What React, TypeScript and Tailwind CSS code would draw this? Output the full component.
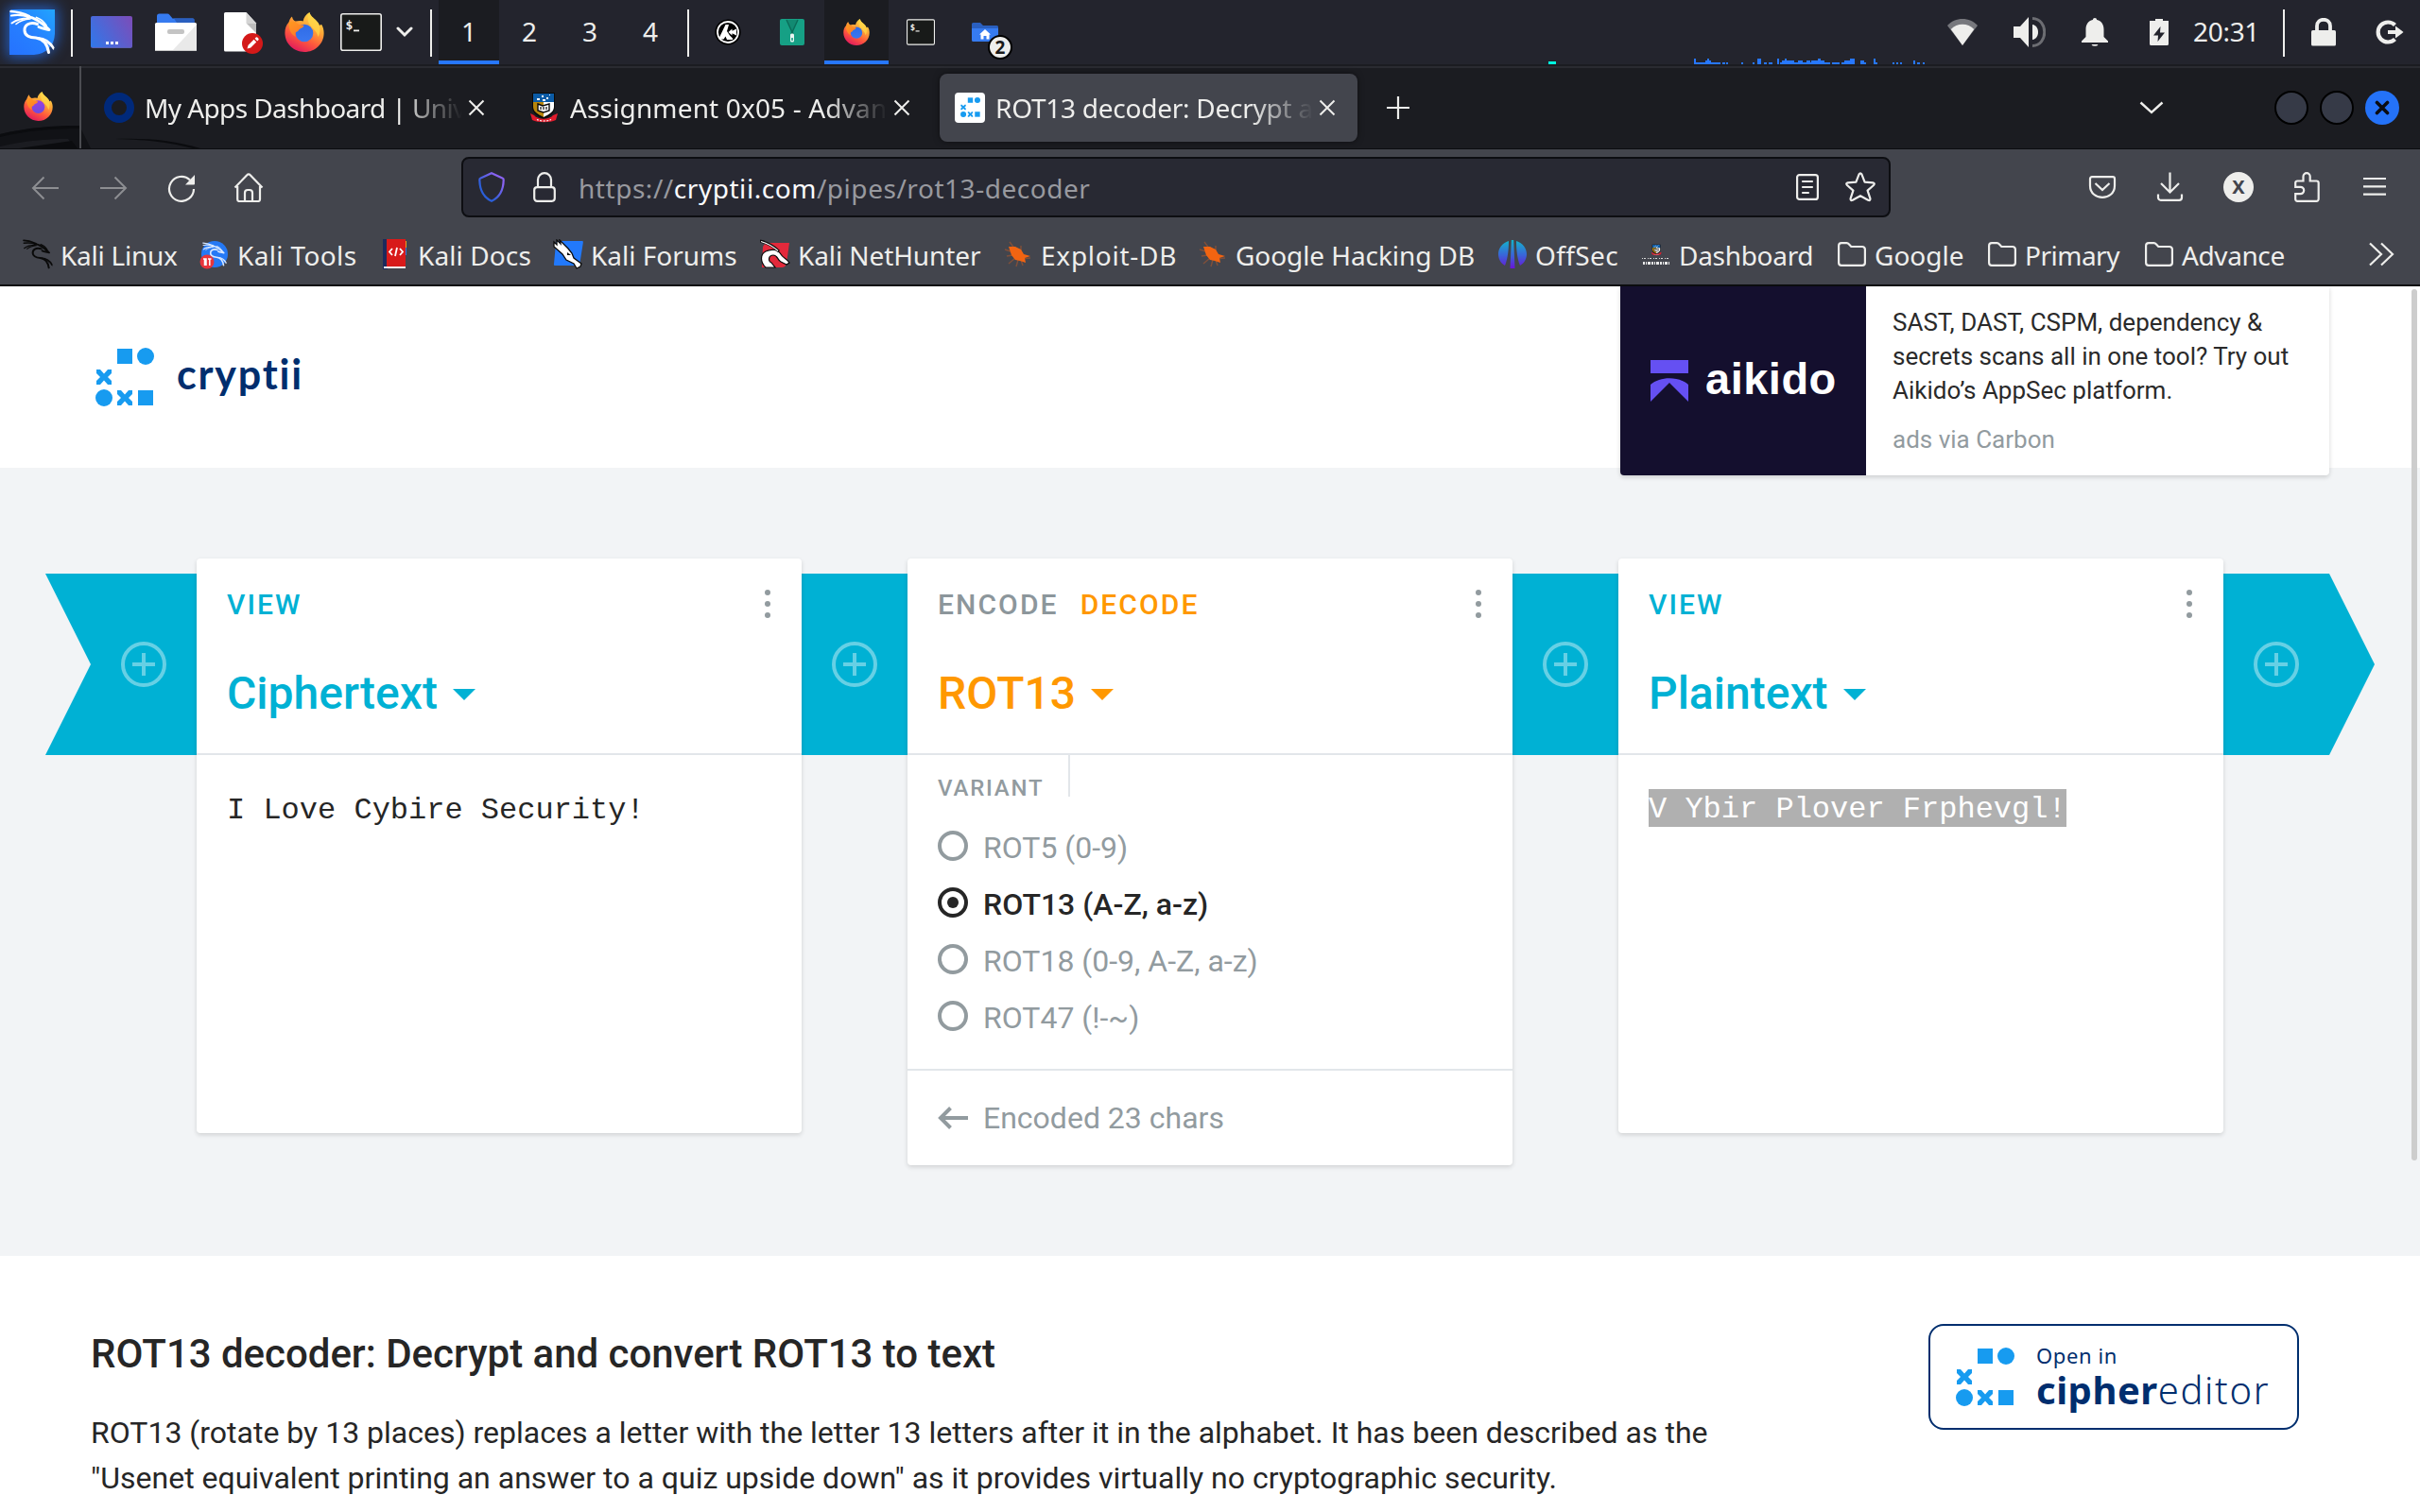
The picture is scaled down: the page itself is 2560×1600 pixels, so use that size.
import type { ReactNode } from "react";

/* ---------- brand drawings ---------- */

function Dragon({ size, color }: { size: number; color: string }) {
  return (
    <svg width={size} height={size} viewBox="0 0 48 48" fill="none" stroke={color} strokeLinecap="round" strokeLinejoin="round">
      <path d="M1.500 2C8 2.500 15 4 21 7" strokeWidth="2.400" />
      <path d="M2 6.500C8 5.500 15 6 21 8" strokeWidth="2.200" />
      <path d="M2.500 14.500C7 11 13 9.500 20 9.500" strokeWidth="2" />
      <path d="M7 15.500C11 12 16 10.500 22 10" strokeWidth="1.600" />
      <path d="M19 7.500C27 8.500 34 13.500 42 21.500C38 20.500 34 20 31 18.500" strokeWidth="3" />
      <path d="M28.500 8.500C33 10 36.500 13 39 17" strokeWidth="1.800" />
      <path d="M29.500 15.500C21 12.500 15.500 17 16 22.500C16.500 28.500 22 29.500 28 30C35 31 40 36 41.500 45.500" strokeWidth="3" />
      <path d="M30 30C37 30.500 43 34 46.500 40.500" strokeWidth="2.200" />
      <path d="M36 33C41 35 44 37.500 46.500 42" strokeWidth="1.400" />
    </svg>
  );
}

function Firefox({ size, id, globe = "#3b78f0", globeDark = "#2f6be6" }: { size: number; id: string; globe?: string; globeDark?: string }) {
  return (
    <svg width={size} height={size} viewBox="0 0 42 42">
      <defs>
        <linearGradient id={id + "-body"} x1="0.8" y1="0.05" x2="0.3" y2="1">
          <stop offset="0" stopColor="#ffe04a" />
          <stop offset="0.35" stopColor="#ffa436" />
          <stop offset="0.65" stopColor="#ff5a3c" />
          <stop offset="1" stopColor="#e0185e" />
        </linearGradient>
        <linearGradient id={id + "-globe"} x1="0" y1="0" x2="0" y2="1">
          <stop offset="0" stopColor={globeDark} />
          <stop offset="1" stopColor={globe} />
        </linearGradient>
        <linearGradient id={id + "-head"} x1="0" y1="0" x2="0.6" y2="1">
          <stop offset="0" stopColor="#ff9a1f" />
          <stop offset="1" stopColor="#ff7a2a" />
        </linearGradient>
      </defs>
      <path d="M4.6 10.5 C5 8 6.5 5.6 8 4.4 C8.2 6.6 9.4 8.4 11.6 9.6 C14 8.8 17 8.6 19.6 9.4 C20.4 5.4 22.8 2 26.4 0 C27.6 4.2 30.4 5.6 33 8.2 C35.6 10.6 36.6 12.2 37 14 L39 12.8 C41 16 41.6 19 41.6 22 C41.6 33.4 32.4 42 21 42 C9.4 42 0.4 33 0.4 21.8 C0.4 17.2 1.8 13.4 4.6 10.5Z" fill={`url(#${id}-body)`} />
      <path d="M26.4 0 C27.6 4.2 30.4 5.6 33 8.2 C38 13 38.6 20 35.6 26 C34.4 21 31 18 28 15 C25 11.6 23 6 26.4 0Z" fill="#ffd84a" opacity="0.75" />
      <circle cx="21" cy="22" r="9.3" fill={`url(#${id}-globe)`} />
      <path d="M4.6 10.5 C8 9 10.4 9.4 12 10.4 C13.4 12.2 15.6 13.4 20.4 13.8 C20.4 15.8 18.4 16.6 16.4 17.6 C14.6 18.6 14.8 20.2 13.2 20.6 C11 21 10.6 23.4 12.2 26 C7 24 4 18 4.6 10.5Z" fill={`url(#${id}-head)`} />
    </svg>
  );
}

function CryptiiMark({ size }: { size: number }) {
  return (
    <svg width={size} height={size} viewBox="0 0 62 62" fill="#179bf0">
      <rect x="23" y="1" width="16" height="16" />
      <circle cx="53" cy="9" r="9" />
      <circle cx="9" cy="53" r="9" />
      <rect x="45" y="45" width="16" height="16" />
      <path d="M1 23H5L9 27.500L13 23H17V27L13 31L17 35V39H13L9 34.500L5 39H1V35L5 31L1 27Z" />
      <path d="M23 45H27L31 49.500L35 45H39V49L35 53L39 57V61H35L31 56.500L27 61H23V57L27 53L23 49Z" />
    </svg>
  );
}

function Crest({ width, height }: { width: number; height: number }) {
  return (
    <svg width={width} height={height} viewBox="0 0 30 32">
      <path d="M2 0H26V15C26 22 20 25 14 28C8 25 2 22 2 15Z" fill="#0a0a0a" />
      <path d="M3 1H25V10H3Z" fill="#0b5ba6" />
      <path d="M3 10H14V26C8 23 3 20 3 15Z" fill="#b8860b" />
      <path d="M14 10H25V15C25 20 20 23 14 26Z" fill="#fff" />
      <path d="M8 12L13 14L20 12V19L14 21L8 19Z" fill="#fff" stroke="#0a0a0a" strokeWidth="1.4" />
      <path d="M11 15V18M14 15V18M17 15V18" stroke="#0a0a0a" strokeWidth="1.2" />
      <path d="M7 6h3v2H7zM12 3h2v2h-2zM17 5h2v2h-2zM13 7h3v2h-3zM20 2h1v1h-1z" fill="#fff" />
      <path d="M0 22L4 24C8 29 20 29 24 24L29 22L27 29C21 32 8 32 2 29Z" fill="#e01b2c" />
      <path d="M7 28.5C11 30.5 18 30.5 22 28.5" stroke="#fff" strokeWidth="1.2" strokeDasharray="2 1.4" fill="none" />
    </svg>
  );
}

function Terminal({ width, height }: { width: number; height: number }) {
  return (
    <svg width={width} height={height} viewBox="0 0 44 40">
      <rect x="0.8" y="0.8" width="42.4" height="38.4" rx="2" fill="#181a19" stroke="#eeeeec" strokeWidth="1.6" />
      <text x="5.5" y="17" fontSize="13" fontWeight="700" fill="#eeeeec" className="font-['DejaVu_Sans_Mono',monospace]">$</text>
      <path d="M14 18.4H20" stroke="#eeeeec" strokeWidth="1.8" />
    </svg>
  );
}

/* ---------- desktop panel ---------- */

function Cell({ children, className = "w-[68px]" }: { children: ReactNode; className?: string }) {
  return <div className={"flex h-full shrink-0 items-center justify-center " + className}>{children}</div>;
}

function Separator() {
  return (
    <Cell className="w-4 pt-px">
      <div className="h-[50px] w-[2px] bg-[#eeeeec]" />
    </Cell>
  );
}

const cpu: [number, number, number][] = [
  [0, 2, 6], [2, 18, 2], [14, 2, 6], [12, 6, 4], [20, 8, 2], [30, 3, 2], [34, 2, 2], [50, 2, 2], [62, 2, 2], [67, 4, 6], [74, 3, 2], [79, 4, 2],
  [88, 2, 6], [91, 5, 2], [93, 4, 4], [96, 2, 6], [98, 8, 4], [106, 8, 2], [110, 5, 4], [115, 10, 2], [119, 4, 4], [124, 7, 4], [131, 3, 6], [134, 4, 4],
  [138, 6, 2], [146, 8, 2], [156, 4, 2], [159, 7, 4], [165, 3, 6], [168, 2, 6], [176, 4, 4], [179, 3, 2], [190, 2, 6], [192, 2, 2], [210, 2, 2],
  [214, 2, 2], [218, 2, 2], [232, 2, 4], [236, 3, 2], [242, 2, 2],
];

function Panel() {
  return (
    <header className="flex h-[68px] items-center bg-[#23242d] font-['Noto_Sans',sans-serif] text-[28px] leading-[28px] text-[#eeeeec]">
      <Cell>
        <div className="flex size-12 items-center justify-center rounded-tl-[4px] rounded-br-[22px] bg-linear-to-tr from-[#2672ff] via-[#2680ff] to-[#23a5ff] shadow-[0_0_14px_3px_rgba(39,119,255,0.65)]">
          <Dragon size={48} color="#ffffff" />
        </div>
      </Cell>
      <Separator />
      <Cell>
        <div className="flex h-[34px] w-11 items-end justify-center gap-[2px] rounded-[2px] border-b border-[#5a5fb0] bg-linear-[60deg] from-[#2f78ea] to-[#7d4cb8] pb-[3px]">
          <i className="size-[3px] bg-white" />
          <i className="size-[3px] bg-white" />
          <i className="size-[3px] bg-white" />
        </div>
      </Cell>
      <Cell>
        <svg width="48" height="48" viewBox="0 0 48 48">
          <path d="M4 16V7a2.500 2.500 0 0 1 2.500-2.500H15a3 3 0 0 1 2.400 1.200L20.500 9.500H42a1.500 1.500 0 0 1 1.500 1.500V16Z" fill="#367bf0" />
          <path d="M22 9.500H42a1.500 1.500 0 0 1 1.500 1.500V14H25Z" fill="#2a5fbf" />
          <rect x="2" y="14" width="44" height="30" rx="1.500" fill="#fff" />
          <path d="M46 16 L20 44 H44.500A1.500 1.500 0 0 0 46 42.500Z" fill="#e9e9e9" />
          <rect x="15" y="21" width="18" height="5" rx="2" fill="#c4c4c4" />
          <rect x="2" y="43" width="44" height="1" fill="#c9c9c9" />
        </svg>
      </Cell>
      <Cell>
        <svg width="48" height="48" viewBox="0 0 48 48">
          <path d="M8.500 3H30.500L41 14.500V44.500H8.500A1.500 1.500 0 0 1 7 43V4.500A1.500 1.500 0 0 1 8.500 3Z" fill="#fff" />
          <path d="M30.500 3V14.500H41Z" fill="#d4d4d4" />
          <path d="M30.500 14.500H41V25Z" fill="#bdbdbd" />
          <circle cx="37" cy="36" r="11" fill="#d41919" />
          <path d="M31.500 41.500L32.600 37.800L38.600 31.800L41.200 34.400L35.200 40.400ZM39.600 30.800L40.800 29.600A1 1 0 0 1 42.200 29.600L43.400 30.800A1 1 0 0 1 43.400 32.200L42.200 33.400Z" fill="#fff" />
        </svg>
      </Cell>
      <Cell><Firefox size={42} id="ff-launch" /></Cell>
      <Cell className="w-[52px]"><Terminal width={44} height={40} /></Cell>
      <Cell className="w-10">
        <svg width="18" height="12" viewBox="0 0 18 12" fill="none"><path d="M2 2L9 9L16 2" stroke="#eeeeec" strokeWidth="3" strokeLinecap="round" /></svg>
      </Cell>
      <Separator />
      <Cell className="w-16 border-b-4 border-[#2777ff] bg-[#1b1c21] pt-[2px]">1</Cell>
      <Cell className="w-16 pb-[2px]">2</Cell>
      <Cell className="w-16 pb-[2px]">3</Cell>
      <Cell className="w-16 pb-[2px]">4</Cell>
      <Separator />
      <Cell>
        <svg width="28" height="28" viewBox="0 0 28 28">
          <circle cx="14" cy="14" r="13.600" fill="#000" />
          <circle cx="14" cy="14" r="11" fill="#000" stroke="#fff" strokeWidth="1.800" />
          <path d="M4.500 20.500L11.500 6H15L13 13L16 17.500L19 20.500V22H13L11.500 18.500L9.500 21.500H4.500Z" fill="#fff" />
          <path d="M14.500 14L18.500 10.500V12.800L23 10.500V17.500L18.500 15.200V17.500Z" fill="#fff" />
        </svg>
      </Cell>
      <Cell>
        <svg width="28" height="28" viewBox="0 0 28 28">
          <rect x="1" y="0" width="26" height="28" rx="2" fill="#16a085" />
          <path d="M8.500 1H19.500L14 13Z" fill="#128a72" />
          <path d="M8 1L13.500 13V16M20 1L14.500 13V16" fill="none" stroke="#0b6b58" strokeWidth="1.400" />
          <rect x="12" y="15.500" width="4" height="9" rx="1.500" fill="#e8f5f2" />
          <rect x="13.200" y="20" width="1.600" height="3" fill="#16a085" />
        </svg>
      </Cell>
      <Cell className="w-[68px] border-b-4 border-[#2777ff] bg-[#1b1c21] pt-1"><Firefox size={28} id="ff-task" /></Cell>
      <Cell><Terminal width={30} height={28} /></Cell>
      <Cell className="relative w-[68px]">
        <svg width="28" height="20" viewBox="0 0 28 20">
          <path d="M0 6V1.500A1.500 1.500 0 0 1 1.500 0H9L12 3H26.500A1.500 1.500 0 0 1 28 4.500V8H0Z" fill="#2a5fbf" />
          <path d="M0 6H28V18.500A1.500 1.500 0 0 1 26.500 20H1.500A1.500 1.500 0 0 1 0 18.500Z" fill="#367bf0" />
          <path d="M14 7L20 12.500H18.500V17.500H15.500V14H12.500V17.500H9.500V12.500H8Z" fill="#fff" />
        </svg>
        <span className="absolute top-[37px] left-[37px] flex size-[26px] items-center justify-center rounded-full border-2 border-black bg-[#eeeeec] text-[19px] leading-[19px] font-bold text-[#1a1a1a]">2</span>
      </Cell>
      <div className="flex h-full flex-1 items-end justify-end">
        <svg width="402" height="8" viewBox="0 0 402 8">
          <rect x="0" y="5" width="8" height="3" fill="#00ffe0" />
          {cpu.map(([x, w, h], i) => <rect key={i} x={154 + x} y={8 - h} width={w} height={h} fill="#2777ff" />)}
        </svg>
      </div>
      <Cell className="w-[72px]">
        <svg width="34" height="30" viewBox="0 0 34 30">
          <path d="M1 8C9 -1.500 25 -1.500 33 8L17 29Z" fill="#77787d" />
          <path d="M4.800 12C11 5 23 5 29.200 12L17 29Z" fill="#eeeeec" />
        </svg>
      </Cell>
      <Cell className="w-[70px]">
        <svg width="34" height="32" viewBox="0 0 34 32">
          <path d="M0 10H7L16 0V32L7 22H0Z" fill="#eeeeec" />
          <path d="M20 8C28 9 28 23 20 24Z" fill="#eeeeec" />
          <path d="M20 1.500C37 2 37 30 20 30.500" fill="none" stroke="#6c6d72" strokeWidth="3" />
        </svg>
      </Cell>
      <Cell>
        <svg width="28" height="30" viewBox="0 0 28 30">
          <path d="M14 0A2.200 2.200 0 0 1 16.200 2C21 3 23.500 7 23.500 12V20L28 24.500V26H0V24.500L4.500 20V12C4.500 7 7 3 11.800 2A2.200 2.200 0 0 1 14 0Z" fill="#eeeeec" />
          <path d="M10.500 28H17.500A3.600 2.400 0 0 1 10.500 28Z" fill="#eeeeec" />
        </svg>
      </Cell>
      <Cell>
        <svg width="20" height="28" viewBox="0 0 20 28">
          <path d="M6 0H14V2H20V26.500A1.500 1.500 0 0 1 18.500 28H1.500A1.500 1.500 0 0 1 0 26.500V2H6Z" fill="#eeeeec" />
          <path d="M11.500 8L4 17.500H9L8.500 24L16 14.500H11Z" fill="#23242d" />
        </svg>
      </Cell>
      <Cell className="w-[90px] justify-start pb-[2px] pl-[2px]"><span className="tracking-[-0.3px]">20:31</span></Cell>
      <Separator />
      <Cell>
        <svg width="26" height="30" viewBox="0 0 26 30">
          <rect x="0" y="13" width="26" height="16.500" rx="1.500" fill="#eeeeec" />
          <path d="M6 14V8.500C6 -0.500 20 -0.500 20 8.500V14" fill="none" stroke="#eeeeec" strokeWidth="3.800" />
        </svg>
      </Cell>
      <Cell className="w-[68px] pl-1">
        <svg width="30" height="26" viewBox="0 0 30 26">
          <path d="M20.500 5.500A10.500 10.500 0 1 0 20.500 20.500" fill="none" stroke="#eeeeec" strokeWidth="4.200" />
          <path d="M13 11H21V6.500L29.500 13L21 19.500V15H13Z" fill="#eeeeec" />
        </svg>
      </Cell>
    </header>
  );
}

/* ---------- browser chrome ---------- */

function CloseX() {
  return (
    <svg width="18" height="18" viewBox="0 0 18 18" className="shrink-0"><path d="M1.500 1.500L16.500 16.500M16.500 1.500L1.500 16.500" stroke="#eeeeec" strokeWidth="2" /></svg>
  );
}

function Tab({ icon, title, tracking, active = false }: { icon: ReactNode; title: string; tracking: string; active?: boolean }) {
  return (
    <div className={"flex h-[72px] w-[442px] shrink-0 items-center rounded-lg pl-4 " + (active ? "bg-[#43454d] shadow-[0_0_6px_rgba(0,0,0,0.5)]" : "")}>
      <div className="flex size-8 shrink-0 items-center justify-center">{icon}</div>
      <div className={"ml-[11px] w-[336px] overflow-hidden pt-px whitespace-nowrap [mask-image:linear-gradient(to_right,black_calc(100%-66px),transparent)] " + tracking}>{title}</div>
      <div className="ml-[6px]"><CloseX /></div>
    </div>
  );
}

function TabBar() {
  return (
    <div className="relative flex h-[90px] items-center overflow-hidden border-t-2 border-b border-t-[#1b1c21] border-b-[#0c0d10] bg-[#1b1c21] text-[28px] leading-[38px] text-[#eeeeec] shadow-[inset_0_2px_0_#2a2b31]">
      <svg className="absolute bottom-0 left-0" width="220" height="30" viewBox="0 0 220 30">
        <path d="M0 15C30 8 55 6 84 6L96 30H80L72 20C50 20 25 22 0 28Z" fill="#111216" />
        <path d="M0 15C30 8 55 6 84 6V9C55 9 30 11 0 18ZM20 30L76 22L82 30Z" fill="#0b0c0f" />
        <path d="M122 20C160 19 185 22 212 30H204C180 24 160 21 122 20Z" fill="#0b0c0f" />
      </svg>
      <div className="relative flex h-full w-[84px] items-center pb-[2px] pl-[25px]"><Firefox size={31} id="ff-pin" globe="#6a4be0" globeDark="#9b3fe0" /></div>
      <div className="relative mr-2 h-full w-[2px] bg-[#4b4c51]" />
      <div className="relative flex flex-1 items-center gap-2">
        <Tab
          icon={<div className="size-8 rounded-full border-8 border-[#00297a]" />}
          title="My Apps Dashboard | Univ"
          tracking="tracking-[-0.6px]"
        />
        <Tab icon={<Crest width={30} height={32} />} title="Assignment 0x05 - Advan" tracking="tracking-[0.15px]" />
        <Tab
          active
          icon={<div className="flex size-8 items-center justify-center rounded-[4px] bg-white"><CryptiiMark size={21} /></div>}
          title="ROT13 decoder: Decrypt a"
          tracking="tracking-[-0.25px]"
        />
        <svg className="ml-[22px]" width="26" height="26" viewBox="0 0 26 26"><path d="M13 1V25M1 13H25" stroke="#eeeeec" strokeWidth="2.200" /></svg>
      </div>
      <svg className="mr-[117px]" width="26" height="14" viewBox="0 0 26 14" fill="none"><path d="M1.500 1.500L13 12L24.500 1.500" stroke="#eeeeec" strokeWidth="2.400" /></svg>
      <div className="mr-[22px] flex gap-3">
        <div className="size-9 rounded-full border-2 border-black bg-[#363a47]" />
        <div className="size-9 rounded-full border-2 border-black bg-[#363a47]" />
        <div className="flex size-9 items-center justify-center rounded-full bg-[#2472f8]">
          <svg width="16" height="16" viewBox="0 0 16 16"><path d="M2.500 2.500L13.500 13.500M13.500 2.500L2.500 13.500" stroke="#0b0c10" strokeWidth="3.600" strokeLinecap="round" /></svg>
        </div>
      </div>
    </div>
  );
}

function NavBar() {
  return (
    <div className="flex h-20 items-center text-[28px] leading-[38px] text-[#eeeeec]">
      <div className="flex w-[488px] items-center pl-8">
        <svg width="32" height="32" viewBox="0 0 32 32" fill="none"><path d="M30 17H3M14.500 5.500L3 17L14.500 28.500" stroke="#8d8e92" strokeWidth="2" /></svg>
        <svg className="ml-10" width="32" height="32" viewBox="0 0 32 32" fill="none"><path d="M2 17H29M17.500 5.500L29 17L17.500 28.500" stroke="#8d8e92" strokeWidth="2" /></svg>
        <svg className="ml-10" width="32" height="32" viewBox="0 0 32 32" fill="none">
          <path d="M29 18A13 13 0 1 1 25 8.500" stroke="#eeeeec" strokeWidth="2.200" />
          <path d="M30 3V12.500A1 1 0 0 1 29 13.500H20Z" fill="#eeeeec" />
        </svg>
        <svg className="ml-[39px]" width="32" height="32" viewBox="0 0 32 32" fill="none">
          <path d="M1.500 16.500L14.500 3A2 2 0 0 1 17.500 3L30.500 16.500M4.200 15V29A2 2 0 0 0 6.200 31H26A2 2 0 0 0 28 29V15M12 31V22A3 3 0 0 1 15 19H17A3 3 0 0 1 20 22V31" stroke="#eeeeec" strokeWidth="2.200" />
        </svg>
      </div>
      <div className="flex h-16 w-[1512px] items-center rounded-lg border-2 border-[#0d0e12] bg-[#282933]">
        <svg className="ml-4" width="28" height="32" viewBox="0 0 28 32" fill="none">
          <defs><linearGradient id="shield" x1="1" y1="0" x2="0" y2="1"><stop offset="0.200" stopColor="#8a63f2" /><stop offset="0.700" stopColor="#2b5fd9" /></linearGradient></defs>
          <path d="M14 1.200L25.500 6.500A2 2 0 0 1 26.700 8.500C26.500 19 22 27 14 30.800C6 27 1.500 19 1.300 8.500A2 2 0 0 1 2.500 6.500Z" stroke="url(#shield)" strokeWidth="2.200" />
        </svg>
        <svg className="ml-[30px]" width="24" height="32" viewBox="0 0 24 32" fill="none">
          <rect x="1.200" y="16.200" width="21.600" height="14.600" rx="3" stroke="#eeeeec" strokeWidth="2.200" />
          <path d="M5 16V8.200A7 7 0 0 1 19 8.200V16" stroke="#eeeeec" strokeWidth="2.200" />
        </svg>
        <div className="ml-6 flex-1 pt-[2px] tracking-[0.54px] text-[#98999f]">https://<span className="text-[#fbfbfe]">cryptii.com</span>/pipes/rot13-decoder</div>
        <svg width="24" height="28" viewBox="0 0 24 28" fill="none">
          <rect x="1.100" y="1.100" width="21.800" height="25.800" rx="2.500" stroke="#eeeeec" strokeWidth="2.200" />
          <path d="M7 8H17M7 14H17M7 20H13" stroke="#eeeeec" strokeWidth="2.200" strokeLinecap="round" />
        </svg>
        <svg className="mr-[14px] ml-7" width="32" height="32" viewBox="0 0 32 32" fill="none">
          <path d="M14.600 2.400Q16 0.200 17.400 2.400L20.600 10.600L29.300 11.400Q31.800 12 30 14L23.600 19.600L26.400 28.200Q26.600 30.800 24.200 29.800L16 25.200L7.800 29.800Q5.400 30.800 5.600 28.200L8.400 19.600L2 14Q0.200 12 2.700 11.400L11.400 10.600Z" stroke="#eeeeec" strokeWidth="2.200" strokeLinejoin="round" />
        </svg>
      </div>
      <div className="ml-auto flex items-center gap-10 pr-8">
        <svg width="32" height="32" viewBox="0 0 32 32" fill="none">
          <path d="M5 5.200H27A2 2 0 0 1 29 7.200V14.500C29 31 3 31 3 14.500V7.200A2 2 0 0 1 5 5.200Z" stroke="#eeeeec" strokeWidth="2.200" />
          <path d="M8.500 12L16 19L23.500 12" stroke="#eeeeec" strokeWidth="2.200" />
        </svg>
        <svg width="32" height="32" viewBox="0 0 32 32" fill="none">
          <path d="M15.500 0.500V21M6 12L15.500 21.500L25 12M3 23.500V27A2.800 2.800 0 0 0 5.800 29.800H25.200A2.800 2.800 0 0 0 28 27V23.500" stroke="#eeeeec" strokeWidth="2.200" />
        </svg>
        <div className="flex size-8 items-center justify-center rounded-full bg-[#eeeeec] text-[20px] leading-[20px] font-bold text-[#43454d]">X</div>
        <svg className="ml-px -mr-px" width="32" height="32" viewBox="0 0 32 32" fill="none">
          <path d="M5.200 9.500H11.500V4.800A3.600 3.600 0 0 1 18.700 4.800V9.500H25.500A2.200 2.200 0 0 1 27.700 11.700V28.600A2.200 2.200 0 0 1 25.500 30.800H5.200A2 2 0 0 1 3.200 28.800V23.200H8.500A3.600 3.600 0 0 0 8.500 15.800H3.200V11.500A2 2 0 0 1 5.200 9.500Z" stroke="#eeeeec" strokeWidth="2.200" />
        </svg>
        <svg width="32" height="32" viewBox="0 0 32 32" fill="none"><path d="M4 7H28M4 15.300H28M4 23.700H28" stroke="#eeeeec" strokeWidth="2.200" /></svg>
      </div>
    </div>
  );
}

function Folder() {
  return (
    <svg width="30" height="26" viewBox="0 0 30 26" fill="none">
      <path d="M4 1.100H9.500A3 3 0 0 1 11.800 2.200L14.300 5H26A2.900 2.900 0 0 1 28.900 8V22A2.900 2.900 0 0 1 26 24.900H4A2.900 2.900 0 0 1 1.100 22V4A2.900 2.900 0 0 1 4 1.100Z" stroke="#eeeeec" strokeWidth="2.200" />
    </svg>
  );
}

function Spider() {
  return (
    <svg width="30" height="28" viewBox="0 0 30 28">
      <path d="M1 9L10 12M6 1L12 9M18 5L18 10M18 19L28 18M5 24L12 18M13 27L15 20M20 26L18 20M3 16L9 15" stroke="#9a5432" strokeWidth="1.400" opacity="0.7" />
      <path d="M5 6L12 6L18 9L21 14L28 16L22 18L23 23L17 21L12 20L8 15Z" fill="#f26411" />
    </svg>
  );
}

function ToolsIcon() {
  return (
    <div className="relative flex size-8 items-center justify-center">
      <div className="flex size-7 items-center justify-center rounded-full bg-[#2579f5]"><Dragon size={26} color="#d9e8ff" /></div>
      <svg className="absolute bottom-0 left-0" width="16" height="16" viewBox="0 0 16 16">
        <circle cx="8" cy="8" r="7.500" fill="#e8353c" />
        <path d="M4 5H7V12M9 5H12.500M10.800 5V12M5.500 5V12" stroke="#fff" strokeWidth="1.500" fill="none" />
      </svg>
    </div>
  );
}

function DocsIcon() {
  return (
    <svg width="26" height="32" viewBox="0 0 26 32">
      <rect x="0" y="0" width="5" height="32" fill="#1c2a5c" />
      <rect x="4" y="0" width="20" height="29" fill="#d81a1a" />
      <rect x="1" y="29" width="23" height="2" fill="#f2f2f2" />
      <path d="M24 2h1v7h-1z" fill="#e8a020" />
      <path d="M24 9h1v8h-1z" fill="#2b7be0" />
      <path d="M10 10L7 13.500L10 17M18 10L21 13.500L18 17M15 9L13 18" stroke="#fff" strokeWidth="1.800" fill="none" />
    </svg>
  );
}

function ForumsIcon() {
  return (
    <svg width="32" height="32" viewBox="0 0 32 32">
      <path d="M6 2H31C32 2 32 3 31.800 4L28 28H2C0.800 28 0.800 27 1 26L3 5C3 3 4 2 6 2Z" fill="#2279fb" />
      <path d="M1 3L4 6L4 1L8 5L7 1L16 10L20 15L22 20L30 26L29 29L25 31L22 26L14 22L10 16L1 8Z" fill="#fff" stroke="#0a0a0a" strokeWidth="1.300" />
      <path d="M15 14L19 17L15 17Z" fill="#0a0a0a" />
    </svg>
  );
}

function NetHunterIcon() {
  return (
    <svg width="32" height="32" viewBox="0 0 32 32">
      <path d="M6 4H31L28 26C27 29 25 30 23 30H2L3 8Z" fill="#e3293b" />
      <path d="M6 30C0 24 0 16 6 13C12 10 19 11 22 16C24 20 29 21 31 25L28 27L22 24C18 22 19 17 14 17C9 17 8 23 12 25L16 30Z" fill="#fff" stroke="#0a0a0a" strokeWidth="1.200" />
      <path d="M0 2C8 4 14 7 20 13" stroke="#0a0a0a" strokeWidth="3" fill="none" />
      <path d="M1 2.500C8 4.500 14 8 19 12.500" stroke="#fff" strokeWidth="1.200" fill="none" />
    </svg>
  );
}

function OffSecIcon() {
  return (
    <svg width="30" height="30" viewBox="0 0 30 30">
      <defs><linearGradient id="offsec" x1="0" y1="0" x2="0" y2="1"><stop offset="0" stopColor="#12b5cb" /><stop offset="0.550" stopColor="#3b62d8" /><stop offset="1" stopColor="#6a14d8" /></linearGradient></defs>
      <path d="M11 1C4 3 0 9 0 15C0 20 3 25 7 27C10 20 11 10 11 1ZM19 1C26 3 30 9 30 15C30 20 27 25 23 27C20 20 19 10 19 1ZM13.800 0H16.200L17.500 30H12.500Z" fill="url(#offsec)" />
    </svg>
  );
}

function UniIcon() {
  return (
    <div className="flex w-[30px] flex-col items-center gap-px">
      <Crest width={11} height={13} />
      <svg width="30" height="9" viewBox="0 0 30 9"><path d="M0 1.500H30" stroke="#d8d8d8" strokeWidth="1" strokeDasharray="1 1 2 2" /><path d="M1 6.500H29" stroke="#e8e8e8" strokeWidth="3" strokeDasharray="2 1 1 1 3 1" /></svg>
    </div>
  );
}

const bookmarks: { label: string; icon: ReactNode; width: string; tracking: string }[] = [
  { label: "Kali Linux", icon: <Dragon size={32} color="#0a0a0a" />, width: "w-[187px]", tracking: "tracking-[-0.25px]" },
  { label: "Kali Tools", icon: <ToolsIcon />, width: "w-[191px]", tracking: "tracking-[0.35px]" },
  { label: "Kali Docs", icon: <DocsIcon />, width: "w-[183px]", tracking: "tracking-[0.1px]" },
  { label: "Kali Forums", icon: <ForumsIcon />, width: "w-[219px]", tracking: "tracking-normal" },
  { label: "Kali NetHunter", icon: <NetHunterIcon />, width: "w-[257px]", tracking: "tracking-[-0.1px]" },
  { label: "Exploit-DB", icon: <Spider />, width: "w-[206px]", tracking: "tracking-[0.75px]" },
  { label: "Google Hacking DB", icon: <Spider />, width: "w-[317px]", tracking: "tracking-[-0.07px]" },
  { label: "OffSec", icon: <OffSecIcon />, width: "w-[152px]", tracking: "tracking-[0.4px]" },
  { label: "Dashboard", icon: <UniIcon />, width: "w-[207px]", tracking: "tracking-[-0.3px]" },
  { label: "Google", icon: <Folder />, width: "w-[159px]", tracking: "tracking-normal" },
  { label: "Primary", icon: <Folder />, width: "w-[166px]", tracking: "tracking-[-0.5px]" },
  { label: "Advance", icon: <Folder />, width: "w-[150px]", tracking: "tracking-[-0.4px]" },
];

function BookmarkBar() {
  return (
    <div className="flex h-[63px] items-center pb-[1px] pl-6 text-[28px] leading-[38px] text-[#eeeeec]">
      {bookmarks.map((b) => (
        <div key={b.label} className={"flex shrink-0 items-center gap-2 " + b.width}>
          <div className="flex size-8 shrink-0 items-center justify-center">{b.icon}</div>
          <span className={"pt-[2px] whitespace-nowrap " + b.tracking}>{b.label}</span>
        </div>
      ))}
      <svg className="mr-[27px] ml-auto" width="28" height="26" viewBox="0 0 28 26" fill="none"><path d="M2 1.500L14 13L2 24.500M14 1.500L26 13L14 24.500" stroke="#eeeeec" strokeWidth="2.200" /></svg>
    </div>
  );
}

/* ---------- page ---------- */

function Ad() {
  return (
    <aside className="absolute top-0 right-24 flex h-[200px] w-[750px] overflow-hidden rounded-b-[4px] bg-white shadow-[0_2px_5px_rgba(0,0,0,0.16)]">
      <div className="flex w-[260px] items-center bg-[#140f2e] pl-8">
        <svg width="40" height="44" viewBox="0 0 40 44" fill="#6550f2">
          <rect x="0" y="0" width="40" height="14" />
          <path d="M0 26C10 17 30 17 40 26V44L20 24L0 44Z" />
        </svg>
        <span className="ml-[18px] pb-[5px] font-['Liberation_Sans',sans-serif] text-[47px] leading-[54px] font-bold tracking-[0.5px] text-white">aikido</span>
      </div>
      <div className="px-7 pt-5 text-[26px] leading-9 text-[#2a2a2a]">
        SAST, DAST, CSPM, dependency &amp;
        <br />
        secrets scans all in one tool? Try out
        <br />
        Aikido’s AppSec platform.
        <div className="mt-4 text-[#929b9f]">ads via Carbon</div>
      </div>
    </aside>
  );
}

function AddBrick({ className }: { className: string }) {
  return (
    <div className={"mt-4 flex h-48 shrink-0 items-center justify-center bg-[#00b1d4] " + className}>
      <svg width="48" height="48" viewBox="0 0 48 48" fill="none" stroke="#66d0e5" strokeWidth="4">
        <circle cx="24" cy="24" r="22" />
        <path d="M24 12V36M12 24H36" />
      </svg>
    </div>
  );
}

function Brick({ modes, title, color, children, className }: { modes: ReactNode; title: string; color: string; children: ReactNode; className: string }) {
  return (
    <section className={"z-10 flex w-[640px] shrink-0 flex-col rounded-[4px] bg-white shadow-[0_2px_5px_rgba(0,0,0,0.14)] " + className}>
      <div className="h-[208px] border-b-2 border-[#e2e6ea] px-8">
        <div className="flex h-[98px] items-center justify-between text-[30px] leading-[36px] font-medium tracking-[2.1px]">
          <div className="flex gap-[23px]">{modes}</div>
          <div className="mr-px flex flex-col gap-[6px] pb-[2px]">
            <i className="size-[6px] rounded-full bg-[#929b9f]" />
            <i className="size-[6px] rounded-full bg-[#929b9f]" />
            <i className="size-[6px] rounded-full bg-[#929b9f]" />
          </div>
        </div>
        <div className={"flex h-[89px] items-center gap-4 text-[48px] leading-[60px] font-medium " + color}>
          {title}
          <svg className="mt-[3px]" width="24" height="12" viewBox="0 0 24 12" fill="currentColor"><path d="M0 0H24L12 12Z" /></svg>
        </div>
      </div>
      {children}
    </section>
  );
}

function Radio({ label, checked = false }: { label: string; checked?: boolean }) {
  return (
    <label className={"flex h-[60px] items-center gap-4 text-[32px] leading-[38px] " + (checked ? "font-medium text-[#262626]" : "text-[#929b9f]")}>
      <svg className="mb-1" width="32" height="32" viewBox="0 0 32 32" fill="none">
        <circle cx="16" cy="16" r="14" stroke="currentColor" strokeWidth="4" />
        {checked && <circle cx="16" cy="16" r="6" fill="currentColor" />}
      </svg>
      {label}
    </label>
  );
}

function Pipe() {
  return (
    <main className="flex h-[834px] items-start bg-[#f2f4f6] px-12 pt-24">
      <AddBrick className="w-40 pl-12 [clip-path:polygon(0_0,100%_0,100%_100%,0_100%,48px_50%)]" />
      <Brick className="h-[608px]" color="text-[#00b1d4]" title="Ciphertext" modes={<span className="text-[#00b1d4]">VIEW</span>}>
        <div className="px-8 pt-[39px] font-['Liberation_Mono',monospace] text-[32px] leading-10 text-[#262626]">I Love Cybire Security!</div>
      </Brick>
      <AddBrick className="w-28" />
      <Brick
        className="h-[642px]"
        color="text-[#ff9800]"
        title="ROT13"
        modes={<><span className="text-[#8c969b]">ENCODE</span><span className="text-[#ff9800]">DECODE</span></>}
      >
        <div className="h-[334px] border-b-2 border-[#e2e6ea] px-8">
          <div className="flex h-[68px] items-start">
            <span className="w-[138px] pt-[17px] text-[24px] leading-9 font-medium tracking-[1.8px] text-[#929b9f]">VARIANT</span>
            <div className="h-11 w-[2px] bg-[#e2e6ea]" />
          </div>
          <Radio label="ROT5 (0-9)" />
          <Radio label="ROT13 (A-Z, a-z)" checked />
          <Radio label="ROT18 (0-9, A-Z, a-z)" />
          <Radio label="ROT47 (!-~)" />
        </div>
        <div className="flex h-[100px] items-center gap-4 px-8 text-[32px] leading-[38px] text-[#929b9f]">
          <svg width="32" height="24" viewBox="0 0 32 24" fill="none"><path d="M32 12H3M13.500 1.500L3 12L13.500 22.500" stroke="currentColor" strokeWidth="4" /></svg>
          Encoded 23 chars
        </div>
      </Brick>
      <AddBrick className="w-28" />
      <Brick className="h-[608px]" color="text-[#00b1d4]" title="Plaintext" modes={<span className="text-[#00b1d4]">VIEW</span>}>
        <div className="px-8 pt-9 font-['Liberation_Mono',monospace] text-[32px] leading-[36px]">
          <div className="w-fit bg-[#b0b0b0] pt-1 text-white">V Ybir Plover Frphevgl!</div>
        </div>
      </Brick>
      <AddBrick className="w-40 pr-12 [clip-path:polygon(0_0,calc(100%-48px)_0,100%_50%,calc(100%-48px)_100%,0_100%)]" />
    </main>
  );
}

function Article() {
  return (
    <article className="flex flex-1 items-start justify-between overflow-hidden bg-white pr-32 pl-24">
      <div className="pt-[74px] text-[#262626]">
        <h1 className="text-[42px] leading-[60px] font-medium tracking-[-0.03px]">ROT13 decoder: Decrypt and convert ROT13 to text</h1>
        <p className="mt-[29px] text-[32px] leading-[48px] whitespace-nowrap">
          ROT13 (rotate by 13 places) replaces a letter with the letter 13 letters after it in the alphabet. It has been described as the
          <br />
          "Usenet equivalent printing an answer to a quiz upside down" as it provides virtually no cryptographic security.
        </p>
      </div>
      <a className="mt-[72px] flex h-28 w-[392px] shrink-0 items-center rounded-2xl border-2 border-[#002e6e] pl-[27px] font-['Noto_Sans',sans-serif] text-[#002e6e]">
        <CryptiiMark size={62} />
        <div className="ml-[23px] flex flex-col pt-[5px]">
          <span className="text-[22px] leading-[22px] tracking-[0.6px]">Open in</span>
          <span className="mt-px text-[40px] leading-[50px] font-bold tracking-[0.5px]">cipher<span className="font-light tracking-[1.7px]">editor</span></span>
        </div>
      </a>
    </article>
  );
}

export default function App() {
  return (
    <div className="flex h-[1600px] w-[2560px] flex-col overflow-hidden bg-white font-['Roboto',sans-serif]">
      <Panel />
      <div className="bg-[#43454d] font-['Noto_Sans',sans-serif]">
        <TabBar />
        <NavBar />
        <BookmarkBar />
        <div className="h-[2px] bg-[#0c0d10]" />
      </div>
      <div className="relative flex flex-1 flex-col">
        <div className="relative z-20 flex h-48 items-center bg-white pl-[101px]">
          <CryptiiMark size={62} />
          <span className="ml-6 pb-[7px] font-['Lato',sans-serif] text-[43px] leading-[50px] font-bold tracking-[1.8px] text-[#002e6e]">cryptii</span>
          <Ad />
        </div>
        <Pipe />
        <Article />
        <div className="absolute top-[3px] right-[3px] z-30 h-[922px] w-[6px] rounded-full bg-[#cdcdcd]" />
      </div>
    </div>
  );
}
